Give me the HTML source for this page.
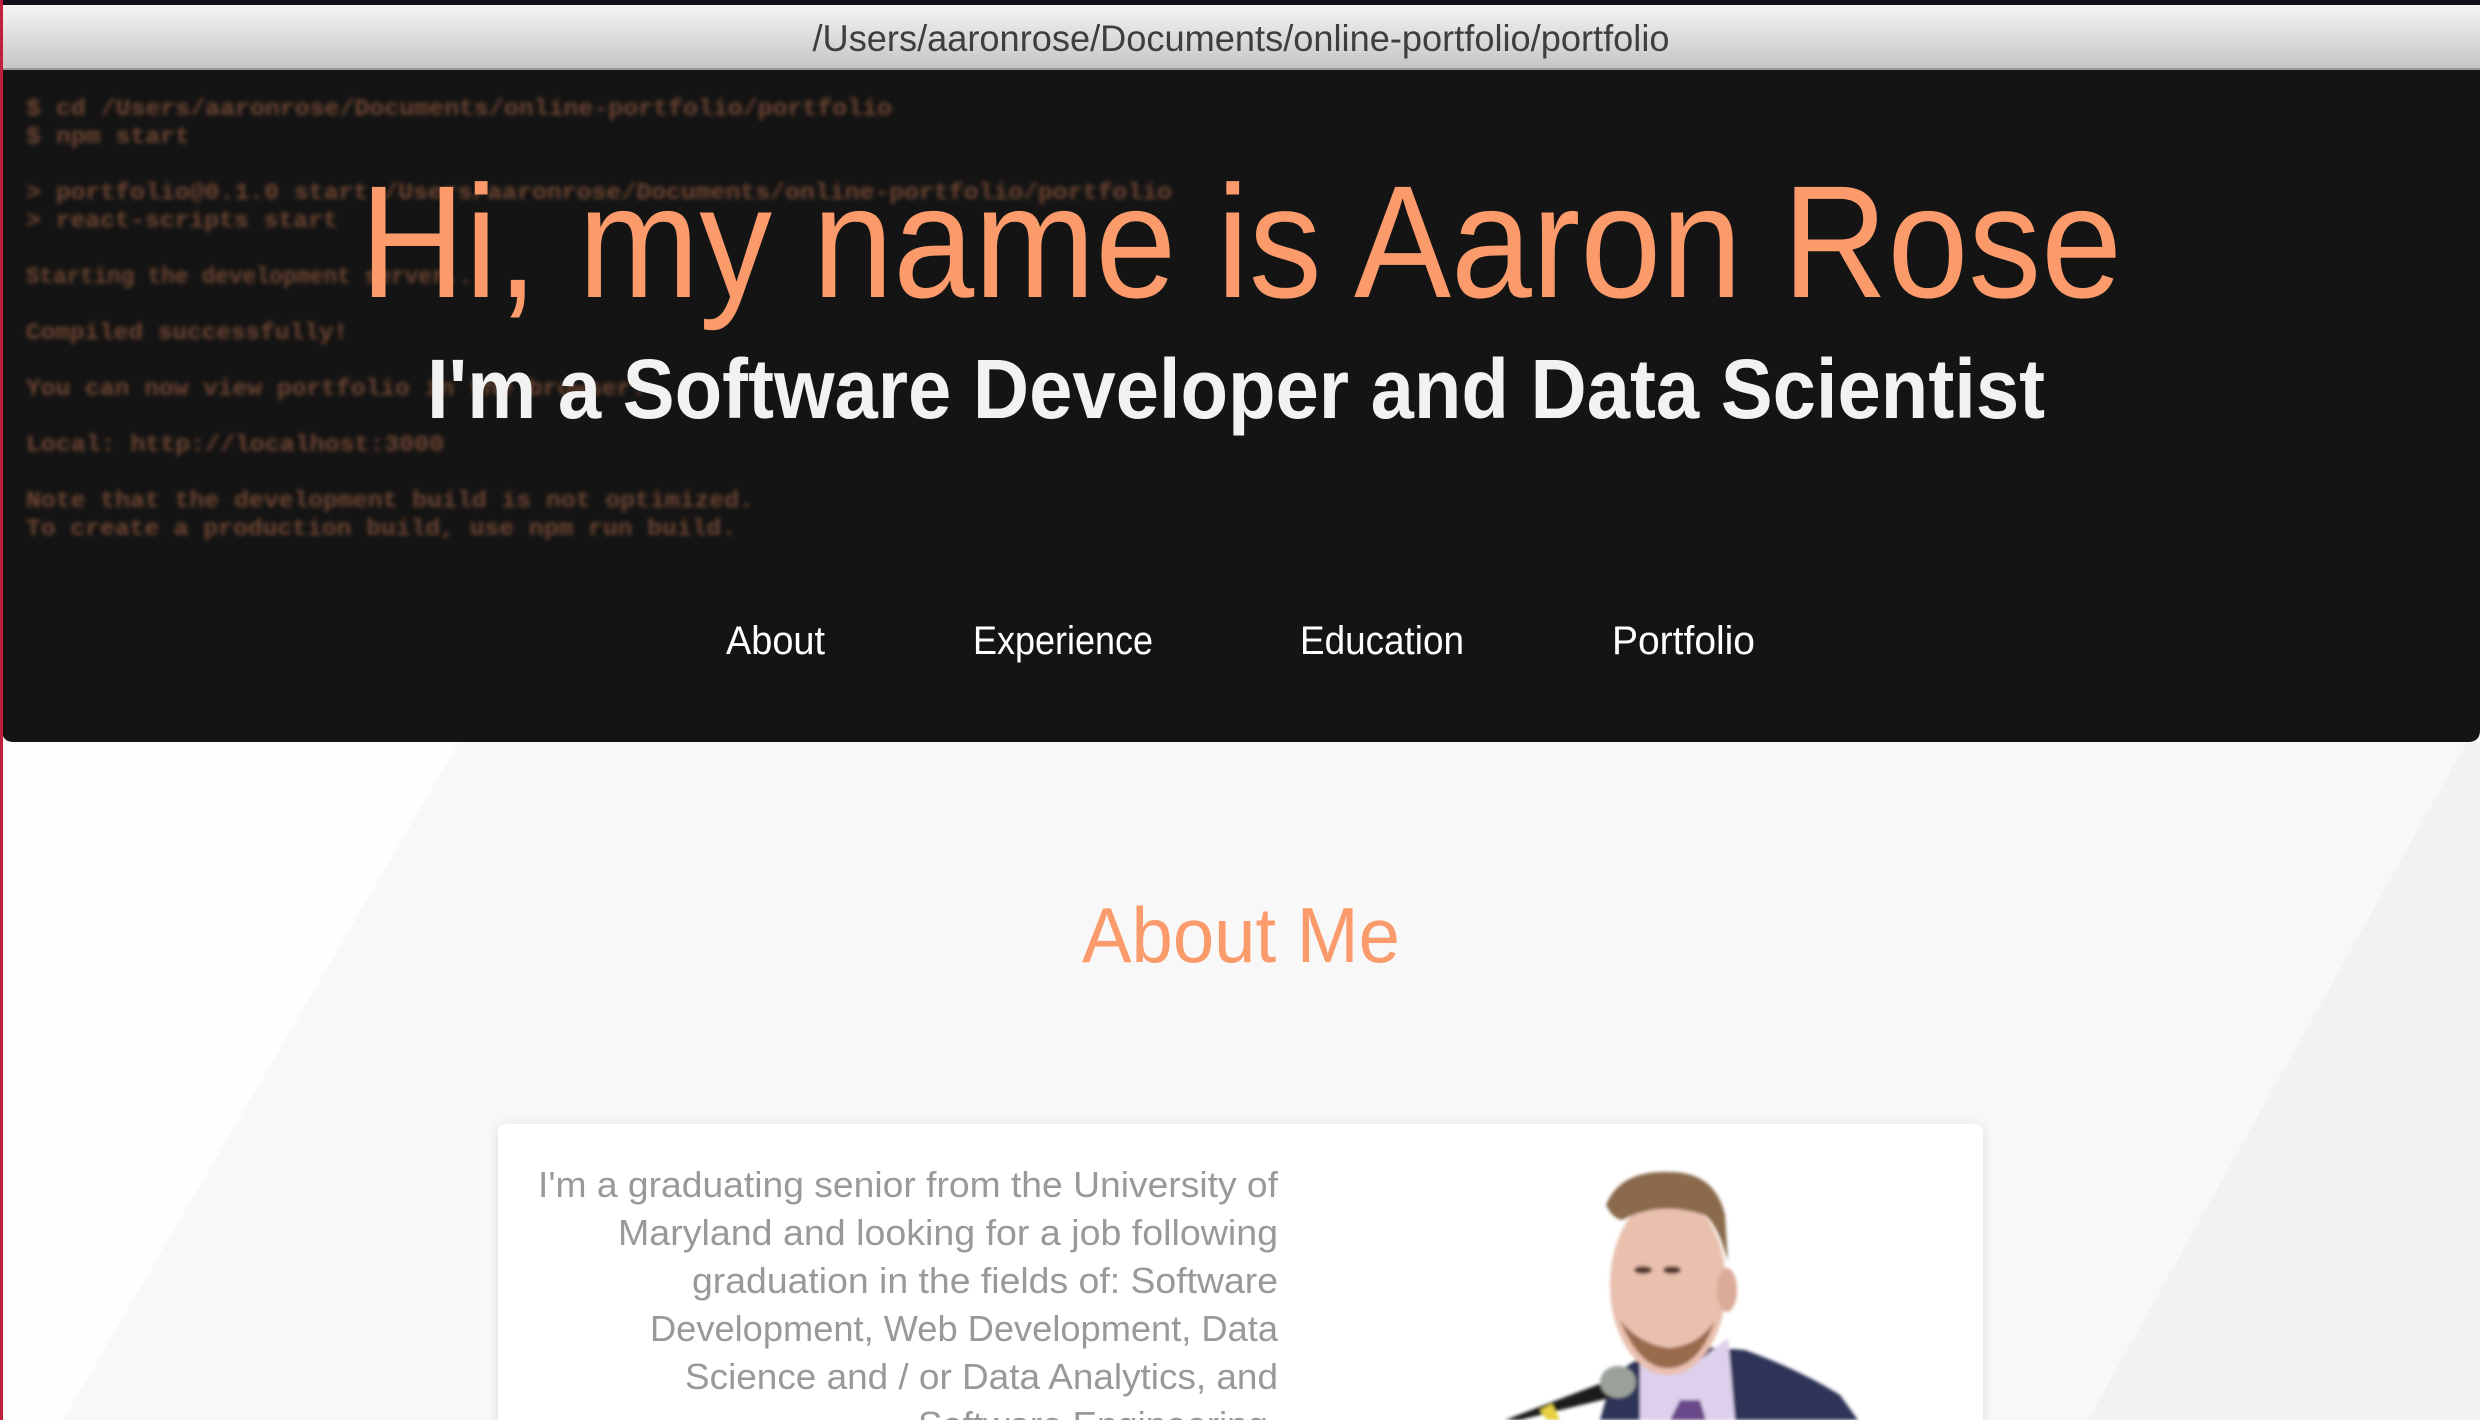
<!DOCTYPE html>
<html><head><meta charset="utf-8"><style>
html,body{margin:0;padding:0;width:2480px;height:1420px;overflow:hidden;background:#f8f8f8;font-family:"Liberation Sans",sans-serif}
.abs{position:absolute}
</style></head><body>
<svg class="abs" style="left:0;top:0" width="2480" height="1420" viewBox="0 0 2480 1420">
<defs>
<linearGradient id="tb" x1="0" y1="0" x2="0" y2="1"><stop offset="0" stop-color="#f4f4f4"/><stop offset="1" stop-color="#c4c4c4"/></linearGradient>
<filter id="bl"><feGaussianBlur stdDeviation="2.2"/></filter>
<filter id="sh" x="-5%" y="-5%" width="110%" height="110%"><feGaussianBlur stdDeviation="6"/></filter>
<filter id="pb"><feGaussianBlur stdDeviation="1.5"/></filter>
</defs>
<!-- background panels -->
<polygon points="0,742 459,742 63,1420 0,1420" fill="#fefefe"/>
<polygon points="2467,742 2480,742 2480,1420 2088,1420" fill="#f2f2f2"/>
<!-- top strip -->
<rect x="0" y="0" width="2480" height="5" fill="#14101c"/>
<!-- hero -->
<path d="M2 70 H2480 V730 Q2480 742 2468 742 H14 Q2 742 2 730 Z" fill="#141414"/>
<rect x="0" y="0" width="3" height="1420" fill="#c0203f"/>
<!-- title bar -->
<rect x="3" y="5" width="2477" height="65" fill="url(#tb)"/>
<rect x="3" y="68" width="2477" height="2" fill="#9a9a9a"/>
<text x="1241" y="51" text-anchor="middle" font-size="37" fill="#3e3e3e" textLength="857" lengthAdjust="spacingAndGlyphs">/Users/aaronrose/Documents/online-portfolio/portfolio</text>
<!-- blurred terminal -->
<g filter="url(#bl)" font-family="Liberation Mono, monospace" font-size="23" fill="#6e4530" font-weight="bold">
<text x="26" y="115" textLength="866" lengthAdjust="spacingAndGlyphs">$ cd /Users/aaronrose/Documents/online-portfolio/portfolio</text>
<text x="26" y="143" textLength="164" lengthAdjust="spacingAndGlyphs">$ npm start</text>
<text x="26" y="199" textLength="1146" lengthAdjust="spacingAndGlyphs">&gt; portfolio@0.1.0 start /Users/aaronrose/Documents/online-portfolio/portfolio</text>
<text x="26" y="227" textLength="312" lengthAdjust="spacingAndGlyphs">&gt; react-scripts start</text>
<text x="26" y="283" textLength="460" lengthAdjust="spacingAndGlyphs">Starting the development server...</text>
<text x="26" y="339" textLength="322" lengthAdjust="spacingAndGlyphs">Compiled successfully!</text>
<text x="26" y="395" textLength="620" lengthAdjust="spacingAndGlyphs">You can now view portfolio in the browser.</text>
<text x="26" y="451" textLength="418" lengthAdjust="spacingAndGlyphs">  Local:  http://localhost:3000</text>
<text x="26" y="507" textLength="728" lengthAdjust="spacingAndGlyphs">Note that the development build is not optimized.</text>
<text x="26" y="535" textLength="710" lengthAdjust="spacingAndGlyphs">To create a production build, use npm run build.</text>
</g>
<!-- headings -->
<text x="360" y="297" font-size="160" fill="#fb9a6b" textLength="1762" lengthAdjust="spacingAndGlyphs">Hi, my name is Aaron Rose</text>
<text x="427" y="418" font-size="84" font-weight="bold" fill="#f2f2f2" textLength="1618" lengthAdjust="spacingAndGlyphs">I'm a Software Developer and Data Scientist</text>
<!-- nav -->
<g font-size="40" fill="#ffffff">
<text x="726" y="654" textLength="99" lengthAdjust="spacingAndGlyphs">About</text>
<text x="973" y="654" textLength="180" lengthAdjust="spacingAndGlyphs">Experience</text>
<text x="1300" y="654" textLength="164" lengthAdjust="spacingAndGlyphs">Education</text>
<text x="1612" y="654" textLength="143" lengthAdjust="spacingAndGlyphs">Portfolio</text>
</g>
<!-- About Me -->
<text x="1082" y="962" font-size="78" fill="#fb9a6b" textLength="318" lengthAdjust="spacingAndGlyphs">About Me</text>
<!-- card -->
<rect x="498" y="1126" width="1485" height="320" rx="8" fill="#000" opacity="0.12" filter="url(#sh)"/>
<rect x="498" y="1124" width="1485" height="320" rx="8" fill="#ffffff"/>
<g font-size="36" fill="#999" text-anchor="end">
<text x="1278" y="1197" textLength="740" lengthAdjust="spacingAndGlyphs">I'm a graduating senior from the University of</text>
<text x="1278" y="1245" textLength="660" lengthAdjust="spacingAndGlyphs">Maryland and looking for a job following</text>
<text x="1278" y="1293" textLength="586" lengthAdjust="spacingAndGlyphs">graduation in the fields of: Software</text>
<text x="1278" y="1341" textLength="628" lengthAdjust="spacingAndGlyphs">Development, Web Development, Data</text>
<text x="1278" y="1389" textLength="593" lengthAdjust="spacingAndGlyphs">Science and / or Data Analytics, and</text>
<text x="1278" y="1437" textLength="360" lengthAdjust="spacingAndGlyphs">Software Engineering.</text>
</g>
<!-- photo -->
<g filter="url(#pb)">
<path d="M1600 1420 L1612 1378 Q1640 1352 1680 1345 L1745 1350 Q1800 1370 1840 1395 L1858 1420 Z" fill="#2f3558"/>
<path d="M1640 1420 L1640 1350 L1700 1360 L1728 1338 L1735 1420 Z" fill="#ddd0ec"/>
<path d="M1670 1420 L1680 1400 L1700 1400 L1706 1420 Z" fill="#6a4a8a"/>
<ellipse cx="1668" cy="1285" rx="58" ry="90" fill="#e9bfae"/>
<path d="M1620 1320 Q1640 1370 1670 1368 Q1700 1366 1715 1320 Q1700 1345 1670 1348 Q1640 1345 1620 1320Z" fill="#9a6a4e"/>
<ellipse cx="1727" cy="1290" rx="10" ry="22" fill="#dcaa98"/>
<path d="M1606 1205 Q1620 1170 1670 1172 Q1715 1172 1725 1215 L1728 1262 Q1718 1225 1705 1215 Q1660 1200 1622 1220 Q1612 1218 1606 1205 Z" fill="#8a6a4c"/>
<ellipse cx="1643" cy="1270" rx="9" ry="4" fill="#5a3a30"/>
<ellipse cx="1672" cy="1270" rx="9" ry="4" fill="#5a3a30"/>
<path d="M1505 1420 L1615 1378 L1622 1395 L1520 1420 Z" fill="#1e1e1e"/>
<ellipse cx="1618" cy="1382" rx="18" ry="16" fill="#9aa09a"/>
<path d="M1540 1410 L1552 1404 L1560 1420 L1547 1420 Z" fill="#e8d040"/>
</g>
</svg>
</body></html>
